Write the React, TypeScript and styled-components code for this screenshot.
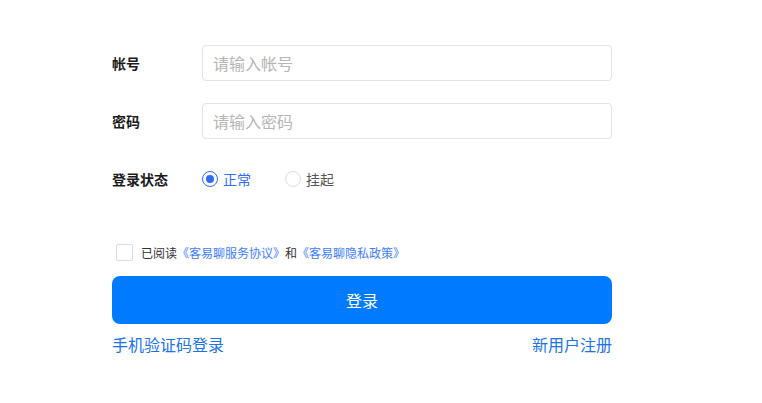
import styled, { createGlobalStyle } from 'styled-components';

const GlobalStyle = createGlobalStyle`
  body {
    margin: 0;
    background: #fff;
    font-family: "Noto Sans CJK SC", "Noto Sans", sans-serif;
  }
  * { box-sizing: border-box; }
`;

function Radio({ checked, label }: { checked?: boolean; label: string }) {
  return (
    <S.RadioLabel $checked={checked}>
      <S.RadioCircle $checked={checked} />
      {label}
    </S.RadioLabel>
  );
}

export default function App() {
  return (
    <>
      <GlobalStyle />
      <S.Page>
        <S.Form>
          <S.Row>
            <S.Label>帐号</S.Label>
            <S.Input placeholder="请输入帐号" />
          </S.Row>
          <S.Row>
            <S.Label>密码</S.Label>
            <S.Input type="password" placeholder="请输入密码" />
          </S.Row>
          <S.Row>
            <S.Label>登录状态</S.Label>
            <S.RadioGroup>
              <Radio checked label="正常" />
              <Radio label="挂起" />
            </S.RadioGroup>
          </S.Row>
          <S.Agreement>
            <S.Checkbox />
            已阅读
            <S.Link>《客易聊服务协议》</S.Link>和
            <S.Link>《客易聊隐私政策》</S.Link>
          </S.Agreement>
          <S.Button>登录</S.Button>
          <S.Footer>
            <S.FooterLink>手机验证码登录</S.FooterLink>
            <S.FooterLink>新用户注册</S.FooterLink>
          </S.Footer>
        </S.Form>
      </S.Page>
    </>
  );
}

const S = {
  Page: styled.div`
    padding: 45px 0 0 112px;
  `,
  Form: styled.div`
    width: 500px;
    display: flex;
    flex-direction: column;
  `,
  Row: styled.div`
    display: flex;
    align-items: center;
    height: 36px;
    margin-bottom: 22px;
  `,
  Label: styled.div`
    width: 90px;
    font-size: 14px;
    font-weight: 700;
    color: #1a1a1a;
  `,
  Input: styled.input`
    flex: 1;
    height: 36px;
    border: 1px solid #e3e3e3;
    border-radius: 4px;
    padding: 0 10px;
    font-family: inherit;
    font-size: 16px;
    color: #333;
    outline: none;
    &::placeholder {
      color: #b5b5b5;
    }
  `,
  RadioGroup: styled.div`
    display: flex;
    gap: 34px;
  `,
  RadioLabel: styled.label<{ $checked?: boolean }>`
    display: flex;
    align-items: center;
    gap: 5px;
    font-size: 14px;
    color: ${({ $checked }) => ($checked ? '#2f6bff' : '#555')};
  `,
  RadioCircle: styled.span<{ $checked?: boolean }>`
    width: 16px;
    height: 16px;
    border-radius: 50%;
    border: 1px solid ${({ $checked }) => ($checked ? '#2f6bff' : '#dcdcdc')};
    display: flex;
    align-items: center;
    justify-content: center;
    &::after {
      content: '';
      width: 8px;
      height: 8px;
      border-radius: 50%;
      background: #2f6bff;
      display: ${({ $checked }) => ($checked ? 'block' : 'none')};
    }
  `,
  Agreement: styled.div`
    display: flex;
    align-items: center;
    margin-top: 24px;
    padding-left: 4px;
    height: 18px;
    font-size: 12px;
    color: #333;
  `,
  Checkbox: styled.span`
    width: 17px;
    height: 17px;
    border: 1px solid #dcdcdc;
    border-radius: 2px;
    margin-right: 8px;
  `,
  Link: styled.span`
    color: #3d7eff;
  `,
  Button: styled.button`
    margin-top: 15px;
    height: 48px;
    border: none;
    border-radius: 8px;
    background: #007bff;
    color: #fff;
    font-family: inherit;
    font-size: 16px;
  `,
  Footer: styled.div`
    display: flex;
    justify-content: space-between;
    margin-top: 8px;
    font-size: 16px;
  `,
  FooterLink: styled.span`
    color: #1a73e8;
  `,
};
